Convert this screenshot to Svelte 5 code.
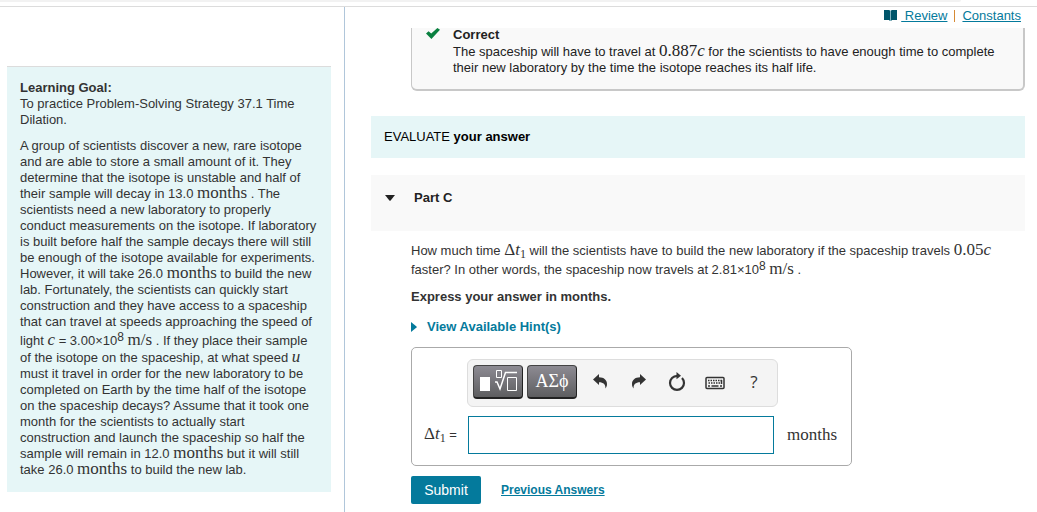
<script>
  let answer = $state('');
</script>

<div class="page">
  <div class="strip"></div>
  <div class="columns">
    <aside>
      <section class="goal">
        <h2>Learning Goal:</h2>
        <p>To practice Problem-Solving Strategy 37.1 Time Dilation.</p>
        <p class="story">
          A group of scientists discover a new, rare isotope and are able to store a small amount of it. They determine that the isotope is unstable and half of their sample will decay in 13.0 <span class="math">months</span> . The scientists need a new laboratory to properly conduct measurements on the isotope. If laboratory is built before half the sample decays there will still be enough of the isotope available for experiments. However, it will take 26.0 <span class="math">months</span> to build the new lab. Fortunately, the scientists can quickly start construction and they have access to a spaceship that can travel at speeds approaching the speed of light <span class="math"><i>c</i></span> = 3.00×10<sup>8</sup> <span class="math tall">m/s</span> . If they place their sample of the isotope on the spaceship, at what speed <span class="math"><i>u</i></span> must it travel in order for the new laboratory to be completed on Earth by the time half of the isotope on the spaceship decays? Assume that it took one month for the scientists to actually start construction and launch the spaceship so half the sample will remain in 12.0 <span class="math">months</span> but it will still take 26.0 <span class="math">months</span> to build the new lab.
        </p>
      </section>
    </aside>

    <main>
      <nav>
        <svg width="13" height="11" viewBox="0 0 13 11" aria-hidden="true">
          <path fill="#00566b" d="M0 0h5l1 .6V11l-1-1H0zM13 0H8L7 .6V11l1-1h5z" />
          <path fill="#7fb3c0" d="M6 .6h1V11H6z" />
        </svg>
        <a href="#review">&nbsp;Review</a>
        <span class="divider"></span>
        <a href="#constants">Constants</a>
      </nav>

      <section class="feedback">
        <svg width="14" height="11" viewBox="0 0 14 11" aria-hidden="true">
          <path fill="#0a8040" d="M0 5.600 2.600 3.200 5.200 5.600 11.400 0 14 1.800 5.400 11z" />
        </svg>
        <div>
          <h3>Correct</h3>
          <p>The spaceship will have to travel at <span class="math">0.887<i>c</i></span> for the scientists to have enough time to complete their new laboratory by the time the isotope reaches its half life.</p>
        </div>
      </section>

      <h2 class="evaluate"><span>EVALUATE</span> your answer</h2>

      <button class="part" type="button" aria-expanded="true">
        <svg width="10" height="6" viewBox="0 0 10 6" aria-hidden="true"><path fill="#222" d="M0 0h10L5.600 5.500Q5 6 4.400 5.500z" /></svg>
        Part C
      </button>

      <div class="body">
        <p class="question">How much time <span class="math">Δ<i>t</i><sub>1</sub></span> will the scientists have to build the new laboratory if the spaceship travels <span class="math">0.05<i>c</i></span> faster? In other words, the spaceship now travels at 2.81×10<sup>8</sup> <span class="math tall">m/s</span> .</p>
        <p class="express">Express your answer in months.</p>
        <a class="hints" href="#hints">
          <svg width="6" height="10" viewBox="0 0 6 10" aria-hidden="true"><path fill="#047a9c" d="M0 0v10L5.500 5.600Q6 5 5.500 4.400z" /></svg>
          View Available Hint(s)
        </a>

        <form class="answer" onsubmit={(e) => e.preventDefault()}>
          <div class="toolbar">
            <button class="dark" type="button" aria-label="Templates">
              <svg width="40" height="24" viewBox="0 0 40 24" fill="none" stroke="#fff">
                <path fill="#fff" stroke="none" d="M2 8h10v14H2z" />
                <path stroke-width="1" d="M18.500 1.500h5v7h-5zM29.500 8.500h9v13h-9z" />
                <path stroke-width="1.500" d="M17 13h2l3 7 5.500-16.500H39" />
              </svg>
            </button>
            <button class="dark greek" type="button">ΑΣϕ</button>
            <button class="tool" type="button" aria-label="Undo">
              <svg width="14" height="15" viewBox="0 0 14 15"><path fill="#333" d="M0 5.500 6 0v3.200c5 0 8 2.800 8 6.800 0 2-.6 3.400-1.600 4.500C12.700 10.400 10.400 8.200 6 8.200V11z" /></svg>
            </button>
            <button class="tool" type="button" aria-label="Redo">
              <svg width="14" height="15" viewBox="0 0 14 15"><path fill="#333" d="M14 5.500 8 0v3.200c-5 0-8 2.800-8 6.800 0 2 .6 3.400 1.600 4.500C1.300 10.400 3.600 8.200 8 8.200V11z" /></svg>
            </button>
            <button class="tool" type="button" aria-label="Reset">
              <svg width="18" height="20" viewBox="0 0 18 20"><path fill="none" stroke="#333" stroke-width="2.200" d="M14 6A7 7 0 1 1 4 6Q6 3.800 9.500 3.800" /><path fill="#333" d="M8.500 0 13 3.800 8.500 7.200z" /></svg>
            </button>
            <button class="tool" type="button" aria-label="Keyboard shortcuts">
              <svg width="20" height="20" viewBox="0 0 20 20" fill="none" stroke="#333"><rect x="1" y="5.500" width="18" height="11" rx="1" stroke-width="1.500" /><path stroke-dasharray="1.500 1" d="M3 8.500h14M3.500 11h13" stroke-width="1.500" /><path d="M3 14h2m1.500 0h7M15 14h2M16.500 8v4" stroke-width="1.500" /></svg>
            </button>
            <button class="tool help" type="button">?</button>
          </div>
          <label for="answer"><span class="math">Δ<i>t</i><sub>1</sub></span> =</label>
          <input id="answer" type="text" bind:value={answer} />
          <span class="math unit">months</span>
        </form>

        <div class="actions">
          <button class="submit" type="button">Submit</button>
          <a href="#previous">Previous Answers</a>
        </div>
      </div>
    </main>
  </div>
</div>

<style>
  :global(body) { margin: 0; background: #fff; }
  .page { font: 13px/16px "Liberation Sans", Arial, sans-serif; color: #333; min-height: 100vh; display: flex; flex-direction: column; }
  .page * { box-sizing: border-box; }
  h2, h3, p { margin: 0; font-size: inherit; }
  button, input { font: inherit; cursor: pointer; }
  .strip { height: 2px; margin-right: 76px; background: #f2f2f2; border-radius: 0 0 8px 0; }
  .columns { flex: 1; margin-top: 4px; border-top: 1px solid #dcdcdc; display: grid; grid-template-columns: 345px minmax(0, 1fr); }
  aside { padding: 59px 13px 0 7px; border-right: 1px solid #b0c6da; }
  .goal { background: #e6f6f7; border-top: 1px solid #dcdcdc; padding: 13px 13px 14px 13px; }
  .story { margin-top: 10px; }
  .math { font: 17px/14px "Liberation Serif", serif; }
  .tall { line-height: 20px; }
  sup, sub { font-size: 12px; line-height: 8px; }
  sup { vertical-align: 4px; }
  sub { vertical-align: -3px; }
  main { padding: 0 12px 8px 26px; }
  nav { height: 21px; display: flex; justify-content: flex-end; align-items: center; padding: 0 4px 4px 0; }
  nav svg { margin-right: 4px; }
  a { color: #047a9c; }
  .divider { width: 1px; height: 12px; margin: 0 7px; background: #d68a35; }
  .feedback { margin-left: 40px; min-height: 63px; display: flex; gap: 13px; padding: 0 16px 13px 14px; color: #222; background: #f9f9f9; border: solid #c8c8c8; border-width: 0 2px 2px 1px; border-radius: 0 0 6px 6px; }
  .feedback h3 { line-height: 13px; padding-bottom: 3px; }
  .feedback svg { flex: none; }
  .evaluate { margin-top: 25px; padding: 13px; background: #e6f6f7; color: #000; }
  .evaluate span { font-weight: normal; }
  .part { width: 100%; height: 56px; margin-top: 17px; padding: 0 14px 10px; border: 0; background: #f9f9f9; color: #222; display: flex; align-items: center; gap: 19px; font-weight: bold; }
  .body { margin-left: 40px; padding-top: 12px; }
  .express { margin-top: 10px; font-weight: bold; }
  .hints { display: flex; width: fit-content; align-items: center; gap: 10px; margin-top: 14px; font-weight: bold; text-decoration: none; }
  .answer { width: fit-content; margin-top: 12px; padding: 11px 14px 11px 12px; border: 1px solid #aaa; border-radius: 5px; display: grid; grid-template-columns: 44px 306px auto; align-items: center; row-gap: 9px; }
  .toolbar { grid-column: 2 / 4; width: 311px; height: 48px; margin-left: -1px; padding: 0 4px 3px 5px; background: #f4f4f4; border: 1px solid #ddd; border-radius: 6px; display: flex; align-items: center; }
  .dark { width: 50px; height: 34px; flex: none; margin-right: 4px; padding: 0; border: 1px solid #444; border-bottom: 2px solid #222; border-right-color: #222; border-radius: 4px; background: linear-gradient(#8d8b93, #5e5e60); color: #fff; display: grid; place-items: center; }
  .greek { font: 18px/20px "Liberation Serif", serif; }
  .tool { flex: 1; height: 34px; padding: 0; border: 0; background: none; color: #333; display: grid; place-items: center; }
  .help { font: 17px/20px "Open Sans", sans-serif; }
  label { grid-column: 1; }
  input { height: 38px; width: 100%; border: 1px solid #047a9c; padding: 4px 8px; background: #fff; }
  .unit { margin-left: 13px; }
  .actions { margin-top: 10px; display: flex; align-items: center; gap: 20px; font-weight: bold; }
  .actions a { font-size: 12px; }
  .submit { width: 70px; height: 28px; padding: 0; border: 0; border-radius: 2px; background: #047a9c; color: #fff; font-size: 14px; font-weight: normal; }
</style>
